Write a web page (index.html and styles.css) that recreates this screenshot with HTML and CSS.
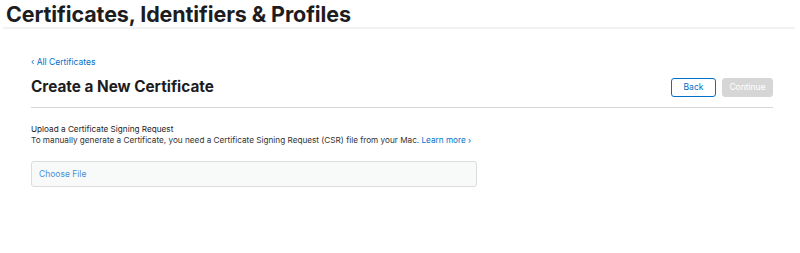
FILE: index.html
```html
<!DOCTYPE html>
<html>
<head>
  <title>Certificates, Identifiers &amp; Profiles</title>
  <link rel="stylesheet" href="styles.css">
</head>
<body>
  <header class="top">
    <h1>Certificates, Identifiers &amp; Profiles</h1>
  </header>
  <div class="main">
    <a class="back-link" href="#">&lsaquo; All Certificates</a>
    <div class="page-head">
      <h2>Create a New Certificate</h2>
      <div class="actions">
        <button class="btn btn-back">Back</button>
        <button class="btn btn-continue" disabled>Continue</button>
      </div>
    </div>
    <div class="section">
      <p class="section-title">Upload a Certificate Signing Request</p>
      <p class="section-text">To manually generate a Certificate, you need a Certificate Signing Request (CSR) file from your Mac. <a href="#">Learn more &rsaquo;</a></p>
      <div class="file-box"><span class="file-label">Choose File</span></div>
    </div>
  </div>
</body>
</html>
```
FILE: styles.css
```css
* {
  box-sizing: border-box;
}
body {
  margin: 0;
  font-family: Inter, "Liberation Sans", sans-serif;
  color: #1d1d1f;
  background: #fff;
}
a {
  color: #0070c9;
  text-decoration: none;
}
/* 상단 제목 */
.top {
  margin: 0 5px 0 3px;
  border-bottom: 2px solid #f2f2f2;
  padding: 3px 0 2px 3px;
}
.top h1 {
  margin: 0;
  font-size: 21.5px;
  font-weight: 700;
  line-height: 22px;
  letter-spacing: -0.1px;
}
.main {
  padding: 27px 27px 0 31px;
  width: 800px;
}
.back-link {
  display: block;
  font-size: 8.5px;
  line-height: 12px;
}
.page-head {
  display: flex;
  align-items: center;
  justify-content: space-between;
  margin-top: 9px;
  padding-bottom: 10px;
  border-bottom: 1px solid #d6d6d6;
}
.page-head h2 {
  margin: 0;
  font-size: 15.3px;
  font-weight: 700;
  line-height: 20px;
}
.actions {
  display: flex;
  gap: 6px;
}
.btn {
  height: 19px;
  padding: 0;
  font-family: inherit;
  font-size: 8.5px;
  border-radius: 3px;
}
.btn-back {
  width: 45px;
  background: #fff;
  border: 1px solid #0070c9;
  color: #0070c9;
}
.btn-continue {
  width: 51px;
  background: #d6d6d6;
  border: 1px solid #d6d6d6;
  color: #fff;
}
.section {
  padding-top: 16px;
}
.section p {
  margin: 0;
  font-size: 8.2px;
  line-height: 11px;
}
.section-text {
  color: #333;
}
.file-box {
  margin-top: 15px;
  width: 446px;
  height: 26px;
  border: 1px solid #dcdcdc;
  border-radius: 3px;
  background: #f8fafa;
  padding: 0 7px;
  display: flex;
  align-items: center;
}
.file-label {
  font-size: 8.5px;
  color: #4a8fd6;
}
```
